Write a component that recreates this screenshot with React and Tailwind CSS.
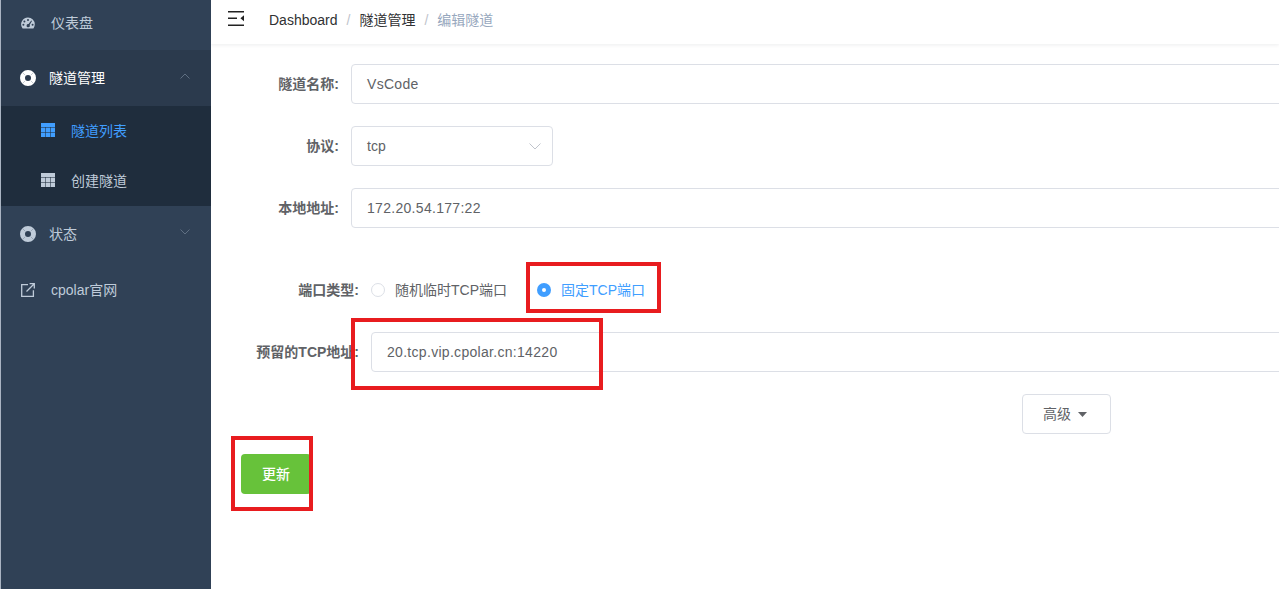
import React from 'react';

const font = { fontFamily: '"Liberation Sans", "Noto Sans CJK SC", sans-serif' };

const Gauge = () => (
  <svg width="14" height="12" viewBox="0 0 14 12" className="text-[#bfcbd9]">
    <path fill="currentColor" fillRule="evenodd" d="M7 0.5a6.8 6.8 0 0 1 6.8 6.8c0 1.5-.4 2.8-1.2 3.9l-.4.3H1.8l-.4-.3A6.8 6.8 0 0 1 7 .5zM7 2a1 1 0 1 0 0 2 1 1 0 0 0 0-2zM3.4 3.5a1 1 0 1 0 0 2 1 1 0 0 0 0-2zM2.4 6.8a1 1 0 1 0 0 2 1 1 0 0 0 0-2zM11.6 6.8a1 1 0 1 0 0 2 1 1 0 0 0 0-2zM10.3 3.6 7.6 7.1a1.6 1.6 0 1 0 1 .8l2.4-3.9z" />
  </svg>
);

const Ring = ({ className }) => (
  <svg width="16" height="16" viewBox="0 0 16 16" className={className}>
    <circle cx="8" cy="8" r="5.500" fill="none" stroke="currentColor" strokeWidth="5" />
    <path d="M2.300 2.300l2.900 2.900M13.700 2.300l-2.900 2.900M2.300 13.700l2.900-2.900M13.700 13.700l-2.900-2.900" stroke="#304156" strokeOpacity="0.35" strokeWidth="0.8" />
  </svg>
);

const Grid = ({ className }) => (
  <svg width="14" height="14" viewBox="0 0 14 14" className={className}>
    <rect width="14" height="14" fill="currentColor" />
    <path d="M0 4.500h14M0 9.500h14M4.500 4v10M9.500 4v10" stroke="#1f2d3d" strokeOpacity="0.55" strokeWidth="1" />
  </svg>
);

const LinkOut = () => (
  <svg width="14" height="14" viewBox="0 0 14 14" fill="none" stroke="#bfcbd9" strokeWidth="1.3">
    <path d="M7 1.600H.7v11.700h11.700V7.200" />
    <path d="M5.500 8.500 13 1M8.600.7h4.700v4.700" />
  </svg>
);

const Chevron = ({ up }) => (
  <svg width="10" height="6" viewBox="0 0 10 6" fill="none" stroke="#5f6f82" strokeWidth="1">
    <path d={up ? 'M.5 5.500 5 1l4.500 4.500' : 'M.5.5 5 5 9.500.5'} />
  </svg>
);

const Row = ({ label, wide, children }) => (
  <div className="flex items-center h-10">
    <label className={`${wide ? 'w-[120px]' : 'w-[100px]'} shrink-0 whitespace-nowrap flex justify-end text-sm font-bold text-[#606266]`}>{label}</label>
    <div className="ml-3 flex items-center">{children}</div>
  </div>
);

const Field = ({ value }) => (
  <div className="w-[1000px] h-10 flex items-center px-[15px] border border-[#dcdfe6] rounded text-sm tracking-[0.3px] text-[#606266]">{value}</div>
);

const Mark = ({ className }) => (
  <div className={`absolute border-4 border-[#e81c1f] pointer-events-none ${className}`} />
);

export default function App() {
  return (
    <div style={font} className="flex h-[589px] w-full overflow-hidden bg-white">
      <aside className="w-[211px] shrink-0 bg-[#304156] border-l border-[#aab4c2] text-sm text-[#bfcbd9]">
        <div className="h-[50px] flex items-center pl-5 pb-[4px]">
          <Gauge />
          <span className="ml-[16px]">仪表盘</span>
        </div>
        <div className="h-14 flex items-center pl-[19px] pr-[21px] bg-[#2b3a4d] text-white">
          <Ring className="text-white" />
          <span className="ml-[13px] flex-1">隧道管理</span>
          <span className="-mt-[4px]"><Chevron up /></span>
        </div>
        <div className="h-[100px] bg-[#1f2d3d]">
          <div className="h-[50px] flex items-center pl-10 text-[#409eff]">
            <Grid className="text-[#409eff] -mt-[3px]" />
            <span className="ml-[16px]">隧道列表</span>
          </div>
          <div className="h-[50px] flex items-center pl-10">
            <Grid className="text-[#bfcbd9] -mt-[3px]" />
            <span className="ml-[16px]">创建隧道</span>
          </div>
        </div>
        <div className="h-14 flex items-center pl-[19px] pr-[21px]">
          <Ring className="text-[#bfcbd9]" />
          <span className="ml-[13px] flex-1">状态</span>
          <span className="-mt-[4px]"><Chevron /></span>
        </div>
        <div className="h-14 flex items-center pl-5">
          <LinkOut />
          <span className="ml-[16px]">cpolar官网</span>
        </div>
      </aside>

      <main className="relative flex-1 min-w-0 overflow-hidden">
        <header className="h-11 flex items-center pl-[17px] shadow-[0_1px_4px_rgba(0,21,41,0.08)]">
          <svg width="16" height="15" viewBox="0 0 16 15" className="-mt-[8px]">
            <path fill="#222" d="M0 0h16v1.600H0zM0 6.500h9v1.600H0zM0 13.400h16V15H0zM16 4.300v6l-3.600-3z" />
          </svg>
          <nav className="ml-[25px] flex items-center text-sm -mt-[5px]">
            <span className="text-[#303133]">Dashboard</span>
            <span className="mx-[9px] text-[#c0c4cc]">/</span>
            <span className="text-[#303133]">隧道管理</span>
            <span className="mx-[9px] text-[#c0c4cc]">/</span>
            <span className="text-[#97a8be]">编辑隧道</span>
          </nav>
        </header>

        <form className="pl-[28px] pt-5">
          <div className="flex flex-col gap-[22px]">
            <Row label="隧道名称:"><Field value="VsCode" /></Row>
            <Row label="协议:">
              <div className="w-[202px] h-10 flex items-center justify-between px-[15px] pr-[11px] border border-[#dcdfe6] rounded text-sm text-[#606266]">
                tcp
                <svg width="12" height="7" viewBox="0 0 12 7" fill="none" stroke="#c0c4cc" strokeWidth="1"><path d="M.5.5 6 6 11.500.5" /></svg>
              </div>
            </Row>
            <Row label="本地地址:"><Field value="172.20.54.177:22" /></Row>
          </div>

          <div className="flex flex-col gap-[22px] mt-[42px]">
            <Row wide label="端口类型:">
              <div className="flex items-center text-sm text-[#606266]">
                <span className="w-[14px] h-[14px] rounded-full border border-[#dcdfe6] bg-white" />
                <span className="ml-[10px]">随机临时TCP端口</span>
                <span className="ml-[30px] w-[14px] h-[14px] rounded-full bg-[#409eff] flex items-center justify-center">
                  <span className="w-[4px] h-[4px] rounded-full bg-white" />
                </span>
                <span className="ml-[10px] text-[#409eff]">固定TCP端口</span>
              </div>
            </Row>
            <Row wide label="预留的TCP地址:"><Field value="20.tcp.vip.cpolar.cn:14220" /></Row>
            <div className="w-[872px] flex justify-end">
              <button type="button" className="w-[89px] h-10 flex items-center justify-center gap-[7px] pr-[3px] border border-[#dcdfe6] rounded text-sm text-[#606266] bg-white">
                高级
                <svg width="9" height="5" viewBox="0 0 9 5"><path fill="#606266" d="M0 0h9L4.500 5z" /></svg>
              </button>
            </div>
          </div>

          <button type="button" className="mt-5 ml-[2px] w-[70px] h-10 rounded bg-[#67c23a] text-white text-sm font-medium">更新</button>
        </form>

        <Mark className="left-[315px] top-[262px] w-[135px] h-[51px]" />
        <Mark className="left-[140px] top-[318px] w-[252px] h-[72px]" />
        <Mark className="left-[20px] top-[436px] w-[82px] h-[75px]" />
      </main>
    </div>
  );
}
